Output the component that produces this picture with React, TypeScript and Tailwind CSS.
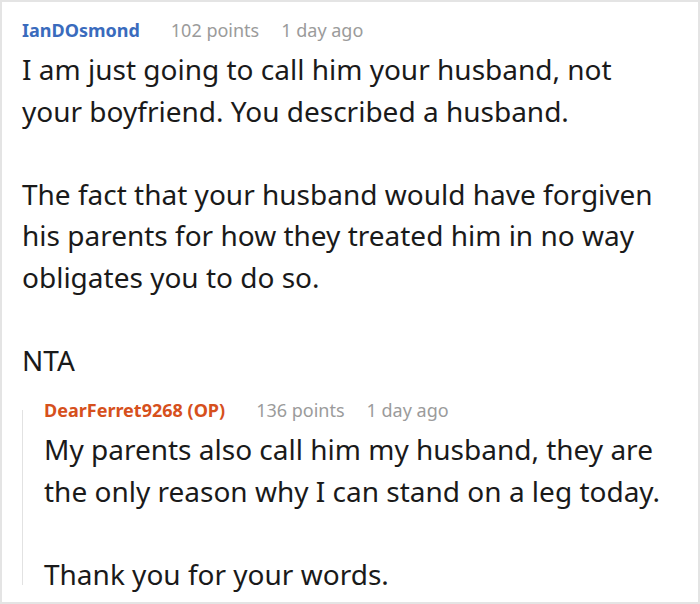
const font = { fontFamily: '"Noto Sans", "Open Sans", sans-serif' };

interface MetaProps {
  author: string;
  authorColor: string;
  points: number;
  time: string;
}

const CommentMeta = ({ author, authorColor, points, time }: MetaProps) => (
  <div className="flex items-center h-[37px] text-[18px] leading-[37px]">
    <span className={`font-bold mr-[31px] ${authorColor}`}>{author}</span>
    <span className="text-[#9b9b9b] mr-[22px]">{points} points</span>
    <span className="text-[#9b9b9b]">{time}</span>
  </div>
);

const Body = ({ text }: { text: string }) => (
  <p className="text-[28px] leading-[41.5px] text-[#1a1a1a] whitespace-pre-line">{text}</p>
);

export default function App() {
  return (
    <div style={font} className="w-[700px] h-[604px] bg-white border-2 border-[#e4e4e4] overflow-hidden">
      <div className="pl-[20px] pt-[10px]">
        <CommentMeta author="IanDOsmond" authorColor="text-[#3a6bbd]" points={102} time="1 day ago" />
        <Body
          text={
            'I am just going to call him your husband, not\nyour boyfriend. You described a husband.\n\nThe fact that your husband would have forgiven\nhis parents for how they treated him in no way\nobligates you to do so.\n\nNTA'
          }
        />

        {/* reply */}
        <div className="flex mt-[11px]">
          <div className="w-px bg-[#e2e2e2] mt-[18px] mb-[10px] shrink-0" />
          <div className="pl-[21px]">
            <CommentMeta author="DearFerret9268 (OP)" authorColor="text-[#d6501c]" points={136} time="1 day ago" />
            <Body
              text={
                'My parents also call him my husband, they are\nthe only reason why I can stand on a leg today.\n\nThank you for your words.'
              }
            />
          </div>
        </div>
      </div>
    </div>
  );
}
